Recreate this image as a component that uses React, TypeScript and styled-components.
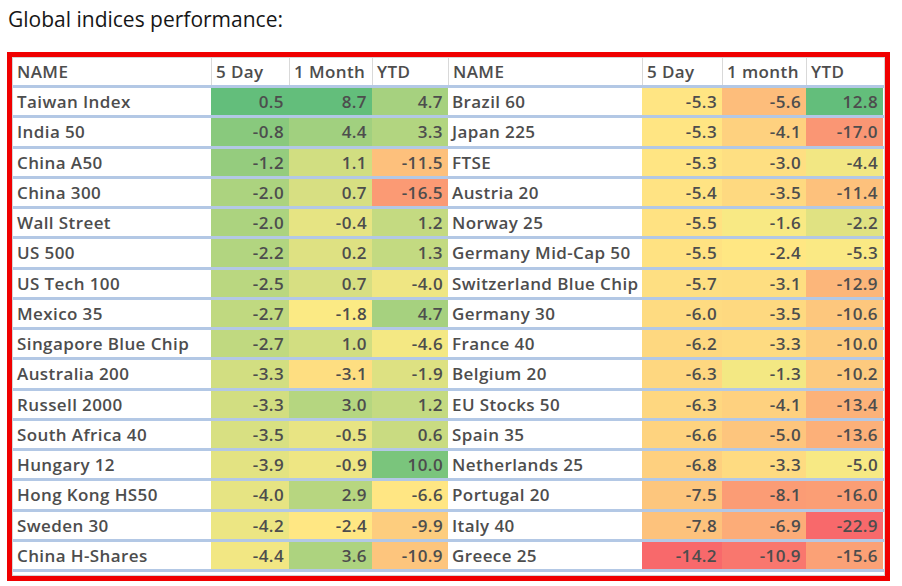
import React from 'react';
import styled, { createGlobalStyle } from 'styled-components';

type Entry = [string, number, number, number];

const leftRows: Entry[] = [
  ['Taiwan Index', 0.5, 8.7, 4.7],
  ['India 50', -0.8, 4.4, 3.3],
  ['China A50', -1.2, 1.1, -11.5],
  ['China 300', -2.0, 0.7, -16.5],
  ['Wall Street', -2.0, -0.4, 1.2],
  ['US 500', -2.2, 0.2, 1.3],
  ['US Tech 100', -2.5, 0.7, -4.0],
  ['Mexico 35', -2.7, -1.8, 4.7],
  ['Singapore Blue Chip', -2.7, 1.0, -4.6],
  ['Australia 200', -3.3, -3.1, -1.9],
  ['Russell 2000', -3.3, 3.0, 1.2],
  ['South Africa 40', -3.5, -0.5, 0.6],
  ['Hungary 12', -3.9, -0.9, 10.0],
  ['Hong Kong HS50', -4.0, 2.9, -6.6],
  ['Sweden 30', -4.2, -2.4, -9.9],
  ['China H-Shares', -4.4, 3.6, -10.9],
];

const rightRows: Entry[] = [
  ['Brazil 60', -5.3, -5.6, 12.8],
  ['Japan 225', -5.3, -4.1, -17.0],
  ['FTSE', -5.3, -3.0, -4.4],
  ['Austria 20', -5.4, -3.5, -11.4],
  ['Norway 25', -5.5, -1.6, -2.2],
  ['Germany Mid-Cap 50', -5.5, -2.4, -5.3],
  ['Switzerland Blue Chip', -5.7, -3.1, -12.9],
  ['Germany 30', -6.0, -3.5, -10.6],
  ['France 40', -6.2, -3.3, -10.0],
  ['Belgium 20', -6.3, -1.3, -10.2],
  ['EU Stocks 50', -6.3, -4.1, -13.4],
  ['Spain 35', -6.6, -5.0, -13.6],
  ['Netherlands 25', -6.8, -3.3, -5.0],
  ['Portugal 20', -7.5, -8.1, -16.0],
  ['Italy 40', -7.8, -6.9, -22.9],
  ['Greece 25', -14.2, -10.9, -15.6],
];

// excel style 3-colour scale: min red, median yellow, max green
const RED = [248, 105, 107];
const YELLOW = [255, 235, 132];
const GREEN = [99, 190, 123];

const mix = (a: number[], b: number[], t: number) =>
  `rgb(${a.map((v, i) => Math.round(v + (b[i] - v) * Math.min(1, t))).join(',')})`;

const makeScale = (values: number[], floor?: number) => {
  const sorted = [...values].sort((a, b) => a - b);
  const n = sorted.length;
  const mid = n % 2 ? sorted[(n - 1) / 2] : (sorted[n / 2 - 1] + sorted[n / 2]) / 2;
  const min = floor ?? sorted[0];
  const max = sorted[n - 1];
  return (v: number) =>
    v >= mid
      ? mix(YELLOW, GREEN, (v - mid) / (max - mid))
      : mix(YELLOW, RED, (mid - v) / (mid - min));
};

const all = [...leftRows, ...rightRows];
const floors = [undefined, -12, undefined];
const scales = [1, 2, 3].map((k) =>
  makeScale(all.map((r) => r[k] as number), floors[k - 1])
);

const GlobalStyle = createGlobalStyle`
  body {
    margin: 0;
    background: #ffffff;
  }
`;

const Page = styled.div`
  width: 902px;
  height: 586px;
  overflow: hidden;
`;

const Title = styled.h2`
  margin: 0;
  padding: 4px 0 0 8px;
  height: 28px;
  font-family: 'Open Sans', 'Noto Sans', sans-serif;
  font-size: 21px;
  font-weight: 500;
  line-height: 30px;
  color: #161616;
`;

const Frame = styled.div`
  box-sizing: border-box;
  width: 883px;
  margin: 20px 0 0 7px;
  border: 5px solid #f00000;
`;

const Sheet = styled.div`
  border: 1px solid #d4d4d4;
  padding-bottom: 3px;
  background: #ffffff;
`;

const Row = styled.div<{ $header?: boolean }>`
  box-sizing: border-box;
  display: grid;
  grid-template-columns: 198px 78px 83px 76px 194px 80px 84px 77px;
  height: ${(p) => (p.$header ? '30px' : '30.25px')};
  border-bottom: 3px solid #b3c8e5;
  font-family: 'Open Sans', 'Noto Sans', sans-serif;
  font-size: 17px;
  letter-spacing: 0.4px;
  font-weight: 600;
  color: #4d4d4d;
`;

const HeadCell = styled.div<{ $first?: boolean }>`
  display: flex;
  align-items: center;
  padding-left: 4px;
  border-left: ${(p) => (p.$first ? 'none' : '1px solid #d9d9d9')};
  white-space: nowrap;
`;

const NameCell = styled.div`
  display: flex;
  align-items: center;
  padding-left: 4px;
  background: #ffffff;
  white-space: nowrap;
`;

const NumCell = styled.div`
  display: flex;
  align-items: center;
  justify-content: flex-end;
  padding-right: 5px;
`;

const headers = ['NAME', '5 Day', '1 Month', 'YTD', 'NAME', '5 Day', '1 month', 'YTD'];

const Half = ({ entry }: { entry: Entry }) => (
  <>
    <NameCell>{entry[0]}</NameCell>
    {[1, 2, 3].map((k) => {
      const v = entry[k] as number;
      return (
        <NumCell key={k} style={{ background: scales[k - 1](v) }}>
          {v.toFixed(1)}
        </NumCell>
      );
    })}
  </>
);

export default function App() {
  return (
    <Page>
      <GlobalStyle />
      <Title>Global indices performance:</Title>
      <Frame>
        <Sheet>
          <Row $header>
            {headers.map((h, i) => (
              <HeadCell key={i} $first={i === 0}>
                {h}
              </HeadCell>
            ))}
          </Row>
          {leftRows.map((row, i) => (
            <Row key={row[0]}>
              <Half entry={row} />
              <Half entry={rightRows[i]} />
            </Row>
          ))}
        </Sheet>
      </Frame>
    </Page>
  );
}
